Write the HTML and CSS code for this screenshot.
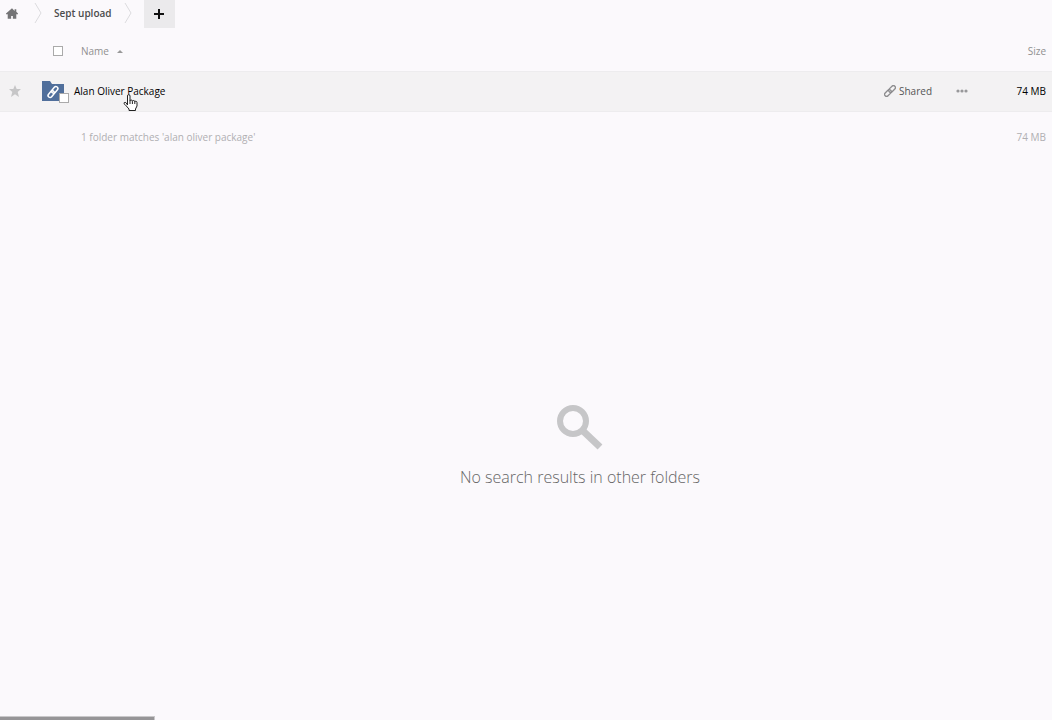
FILE: index.html
```html
<!DOCTYPE html>
<html lang="en">
<head>
    <meta charset="UTF-8">
    <meta name="viewport" content="width=device-width, initial-scale=1.0">
    <title>Sept upload</title>
    <link rel="stylesheet" href="styles.css">
</head>
<body>

    <nav class="breadcrumbs" aria-label="Folders">
        <a class="crumb-home" href="#" aria-label="Home">
            <svg width="12" height="11" viewBox="0 0 14 12"><path fill="#747476" d="M7 0 0 6v1h2v5h4V9h2v3h4V7h2V6l-2-2V1h-2v2z"/></svg>
        </a>
        <svg class="crumb-arrow" width="8" height="20" viewBox="0 0 8 20"><path d="M1 0l6 10-6 10"/></svg>
        <a class="crumb" href="#">Sept upload</a>
        <svg class="crumb-arrow" width="8" height="20" viewBox="0 0 8 20"><path d="M1 0l6 10-6 10"/></svg>
        <button class="add" type="button" aria-label="New">
            <svg width="12" height="12" viewBox="0 0 12 12"><path d="M1 6h10M6 1v10" stroke="#111" stroke-width="2"/></svg>
        </button>
    </nav>

    <table class="files">
        <colgroup>
            <col class="w-star">
            <col>
            <col class="w-shared">
            <col class="w-more">
            <col class="w-size">
        </colgroup>
        <thead>
            <tr>
                <th class="col-star"></th>
                <th class="col-name">
                    <div class="head-name">
                        <input class="box" type="checkbox" aria-label="Select all">
                        <a href="#">Name</a>
                        <svg width="6" height="3" viewBox="0 0 6 3"><path d="M0 3l3-3 3 3z" fill="#999"/></svg>
                    </div>
                </th>
                <th></th>
                <th></th>
                <th class="col-size"><a href="#">Size</a></th>
            </tr>
        </thead>
        <tbody>
            <tr>
                <td class="col-star">
                    <button class="icon-button" type="button" aria-label="Favorite">
                        <svg width="12" height="12" viewBox="0 0 12 12"><path fill="#c6c6c7" d="M6 0l1.700 4H12L8.700 7l1.300 5-4-2.700L2 12l1.300-5L0 4h4.300z"/></svg>
                    </button>
                </td>
                <td class="col-name">
                    <div class="file-name">
                        <span class="thumb">
                            <svg width="24" height="20" viewBox="0 0 24 20">
                                <path fill="#506f9b" d="M1 0h8l2 3h12v17H1z"/>
                                <g transform="rotate(-50 12 11)" fill="none" stroke="#fff" stroke-width="1.500">
                                    <rect x="5.500" y="9" width="7.500" height="4" rx="2"/>
                                    <rect x="11" y="9" width="7.500" height="4" rx="2"/>
                                </g>
                            </svg>
                            <input class="box thumb-box" type="checkbox" aria-label="Select Alan Oliver Package">
                        </span>
                        <a href="#">Alan Oliver Package</a>
                    </div>
                    <svg class="pointer" width="15" height="18" viewBox="0 0 15 18"><path fill="#fff" stroke="#222" stroke-linejoin="round" d="M4.500 11V2Q4.500.6 5.700.6T7 2v5q0-1 1.200-1t1.200 1.300q.2-.9 1.300-.8t1.100 1.300q.2-.7 1.100-.6t1.100 1.300v3.500l-1.500 3v1.500H6v-1.500l-4-4.500Q.3 9.500 1.200 8.700t2 .2zM7 7v3M9.400 7.300V10M11.800 7.800V10"/></svg>
                </td>
                <td>
                    <button class="shared" type="button">
                        <svg width="12" height="12" viewBox="0 0 12 12">
                            <g transform="rotate(-45 6 6)" fill="none" stroke="#8c8c8e" stroke-width="1.300">
                                <rect x="-.8" y="4" width="7.800" height="4" rx="2"/>
                                <rect x="5" y="4" width="7.800" height="4" rx="2"/>
                            </g>
                        </svg>
                        Shared
                    </button>
                </td>
                <td>
                    <button class="icon-button" type="button" aria-label="More">
                        <svg width="12" height="4" viewBox="0 0 12 4" fill="#98989a"><circle cx="2" cy="2" r="1.600"/><circle cx="6" cy="2" r="1.600"/><circle cx="10" cy="2" r="1.600"/></svg>
                    </button>
                </td>
                <td class="col-size">74 MB</td>
            </tr>
        </tbody>
        <tfoot>
            <tr>
                <td class="col-star"></td>
                <td class="summary" colspan="3">1 folder matches 'alan oliver package'</td>
                <td class="col-size">74 MB</td>
            </tr>
        </tfoot>
    </table>

    <div class="no-results">
        <svg width="46" height="46" viewBox="0 0 46 46" fill="none" stroke="#c6c6c8"><circle cx="16" cy="17" r="13" stroke-width="6"/><path d="M25 26l18 17" stroke-width="7"/></svg>
        <p>No search results in other folders</p>
    </div>

    <div class="status-bar"></div>

</body>
</html>
```
FILE: styles.css
```css
* {
    box-sizing: border-box;
}

body {
    margin: 0;
    min-height: 100vh;
    display: flex;
    flex-direction: column;
    font-family: 'Open Sans', sans-serif;
    font-size: 10px;
    line-height: 18px;
    color: #000;
    background: #fbf9fc;
}

a {
    color: inherit;
    text-decoration: none;
}

button {
    padding: 0;
    border: none;
    background: none;
    color: inherit;
    font: inherit;
    cursor: pointer;
}

svg {
    display: block;
    flex: none;
}

.breadcrumbs {
    display: flex;
    align-items: center;
    height: 28px;
    padding-bottom: 2px;
}

.crumb-home {
    padding: 0 16px 0 6px;
}

.crumb-arrow {
    fill: none;
    stroke: #dcdbde;
}

.crumb {
    padding: 0 12px;
    font-weight: 600;
    color: #4c4c4c;
}

.add {
    display: flex;
    align-items: center;
    justify-content: center;
    align-self: flex-start;
    width: 31px;
    height: 28px;
    margin-left: 12px;
    background: #ebeaec;
}

.files {
    width: 100%;
    border-collapse: collapse;
    table-layout: fixed;
}

.files th,
.files td {
    padding: 0;
    text-align: left;
    font-weight: 400;
}

.files thead tr {
    height: 43px;
    color: #909090;
}

.files thead th {
    padding-top: 4px;
}

.files tbody tr {
    height: 40px;
    background: #f3f2f3;
    border-top: 1px solid #edecee;
    border-bottom: 1px solid #edecee;
}

.files tfoot tr {
    height: 51px;
    color: #b0afb2;
}

.w-star {
    width: 41px;
}

.w-shared {
    width: 72px;
}

.w-more {
    width: 36px;
}

.w-size {
    width: 60px;
}

.files .col-star {
    padding-left: 9px;
}

.files .col-name {
    position: relative;
}

.files .col-size {
    padding-right: 6px;
    text-align: right;
}

.files .summary {
    padding-left: 40px;
}

.head-name {
    display: flex;
    align-items: center;
    gap: 8px;
    padding-left: 12px;
}

.box {
    appearance: none;
    width: 10px;
    height: 10px;
    margin: 0;
    border: 1px solid #aaa;
    background: #fff;
}

.head-name .box {
    margin-right: 10px;
}

.file-name {
    display: flex;
    align-items: center;
    gap: 9px;
}

.thumb {
    position: relative;
}

.thumb-box {
    position: absolute;
    right: -4px;
    bottom: -2px;
}

.pointer {
    position: absolute;
    left: 82px;
    top: 22px;
}

.icon-button {
    display: block;
}

.shared {
    display: flex;
    align-items: center;
    gap: 3px;
    color: #555;
}

.no-results {
    flex: 1;
    display: flex;
    flex-direction: column;
    align-items: center;
    justify-content: center;
    gap: 13px;
    padding-left: 108px;
    padding-top: 16px;
    font-size: 16px;
    font-weight: 300;
    line-height: 28px;
    color: #666;
}

.no-results p {
    margin: 0;
}

.status-bar {
    width: 155px;
    height: 4px;
    border-top: 1px solid #c9c8ca;
    border-right: 1px solid #c9c8ca;
    background: #969597;
}
```
